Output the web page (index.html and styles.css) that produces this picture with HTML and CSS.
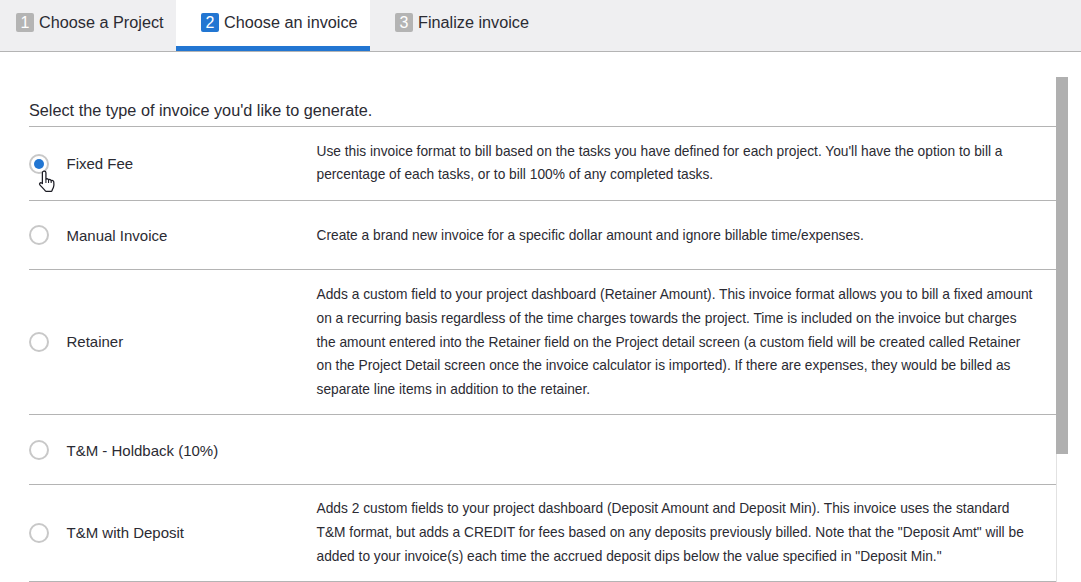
FILE: index.html
```html
<!DOCTYPE html>
<html lang="en">
<head>
<meta charset="utf-8">
<title>Choose an invoice</title>
<link rel="stylesheet" href="styles.css">
</head>
<body>
<nav class="tabs">
  <div class="tab tab-first"><span class="num">1</span>Choose a Project</div>
  <div class="tab tab-active"><span class="num">2</span>Choose an invoice</div>
  <div class="tab tab-last"><span class="num">3</span>Finalize invoice</div>
</nav>
<main class="panel">
  <div class="scroller">
    <h1 class="lead">Select the type of invoice you'd like to generate.</h1>
    <div class="row row-fixed">
      <span class="radio radio-on"></span>
      <span class="name">Fixed Fee</span>
      <p class="desc">Use this invoice format to bill based on the tasks you have defined for each project. You'll have the option to bill a percentage of each tasks, or to bill 100% of any completed tasks.</p>
      <svg class="cursor" width="19" height="23" viewBox="0 0 18 22"><path d="M5.800 1c1 0 1.700.8 1.700 1.700v6.100c.9-.8 2.300-.4 2.500.7.800-.8 2.300-.4 2.500.8.900-.6 2.300-.2 2.500 1 .3 2 .2 3.600-.3 5.200-.4 1.200-1 2-1.400 3.300-.1.400-.4.700-.8.700H7.800c-.4 0-.7-.2-.9-.5-1.600-2-3.400-3.700-5.200-5.700-.9-1 .3-2.700 1.700-1.800l.7.500V2.700c0-.9.700-1.700 1.700-1.700z" fill="#fff" stroke="#1c1c24" stroke-width="1.200" stroke-linejoin="round"/><path d="M7.500 8.800v3.700M10 9.500v3M12.500 10.300v2.200" stroke="#1c1c24" stroke-width="1" fill="none"/></svg>
    </div>
    <div class="row row-manual">
      <span class="radio"></span>
      <span class="name name-low">Manual Invoice</span>
      <p class="desc desc-low">Create a brand new invoice for a specific dollar amount and ignore billable time/expenses.</p>
    </div>
    <div class="row row-retainer">
      <span class="radio"></span>
      <span class="name name-high">Retainer</span>
      <p class="desc desc-low">Adds a custom field to your project dashboard (Retainer Amount). This invoice format allows you to bill a fixed amount on a recurring basis regardless of the time charges towards the project. Time is included on the invoice but charges the amount entered into the Retainer field on the Project detail screen (a custom field will be created called Retainer on the Project Detail screen once the invoice calculator is imported). If there are expenses, they would be billed as separate line items in addition to the retainer.</p>
    </div>
    <div class="row row-holdback">
      <span class="radio"></span>
      <span class="name name-low">T&amp;M - Holdback (10%)</span>
      <p class="desc"></p>
    </div>
    <div class="row row-deposit">
      <span class="radio"></span>
      <span class="name name-high">T&amp;M with Deposit</span>
      <p class="desc">Adds 2 custom fields to your project dashboard (Deposit Amount and Deposit Min). This invoice uses the standard T&amp;M format, but adds a CREDIT for fees based on any deposits previously billed. Note that the "Deposit Amt" will be added to your invoice(s) each time the accrued deposit dips below the value specified in "Deposit Min."</p>
    </div>
  </div>
  <div class="track"><div class="rail"><div class="thumb"></div></div></div>
</main>
</body>
</html>
```
FILE: styles.css
```css
* { box-sizing: border-box; }
html, body { margin: 0; height: 100%; overflow: hidden; background: #fff; }
body { font-family: "Liberation Sans", Arial, sans-serif; color: #2b2b33; }
.tabs { display: flex; height: 52px; background: #efeff1; border-bottom: 1px solid #b4b4b4; font-size: 16.24px; }
.tab { display: flex; align-items: center; height: 51px; padding-bottom: 6px; }
.tab-first { width: 176px; padding-left: 16px; }
.tab-active { width: 194px; padding-left: 25px; background: #fff; border-bottom: 5px solid #2276d2; padding-bottom: 1px; }
.tab-last { padding-left: 25px; }
.num { display: flex; align-items: center; justify-content: center; width: 18px; height: 19px; margin-right: 5px; border-radius: 2px; background: #b4b4b4; color: #fff; font-size: 16px; }
.tab-active .num { background: #2276d2; }
.panel { display: flex; height: 530px; }
.scroller { width: 1056px; padding: 47px 0 0 29px; flex: none; }
.lead { margin: 0; height: 28px; font-size: 16.24px; font-weight: 400; line-height: 22px; border-bottom: 1px solid #b4b4b4; }
.row { position: relative; display: flex; align-items: center; border-bottom: 1px solid #b4b4b4; font-size: 15px; }
.row-fixed { height: 74px; }
.row-manual { height: 69px; }
.row-retainer { height: 145px; }
.row-holdback { height: 70px; }
.row-deposit { height: 97px; }
.radio { flex: none; width: 20px; height: 20px; margin-right: 17.5px; border: 2px solid #c8c8c8; border-radius: 50%; background: #fff; display: flex; align-items: center; justify-content: center; }
.radio-on::after { content: ""; width: 10px; height: 10px; border-radius: 50%; background: #2276d2; }
.name { flex: none; width: 250px; }
.name-low { padding-top: 1px; }
.name-high { padding-bottom: 1px; }
.desc { margin: 0; width: 720px; font-size: 13.76px; line-height: 24px; }
.desc-low { padding-top: 1px; }
.row-retainer .desc { line-height: 23.8px; }
.row-fixed .desc { line-height: 23px; padding-bottom: 2px; }
.cursor { position: absolute; left: 9px; top: 43px; }
.track { width: 12px; height: 100%; padding-top: 25px; }
.rail { height: 100%; border-left: 1px solid #e2e2e2; }
.thumb { width: 12px; height: 377px; margin-left: -1px; background: #b0b0b0; }
```
